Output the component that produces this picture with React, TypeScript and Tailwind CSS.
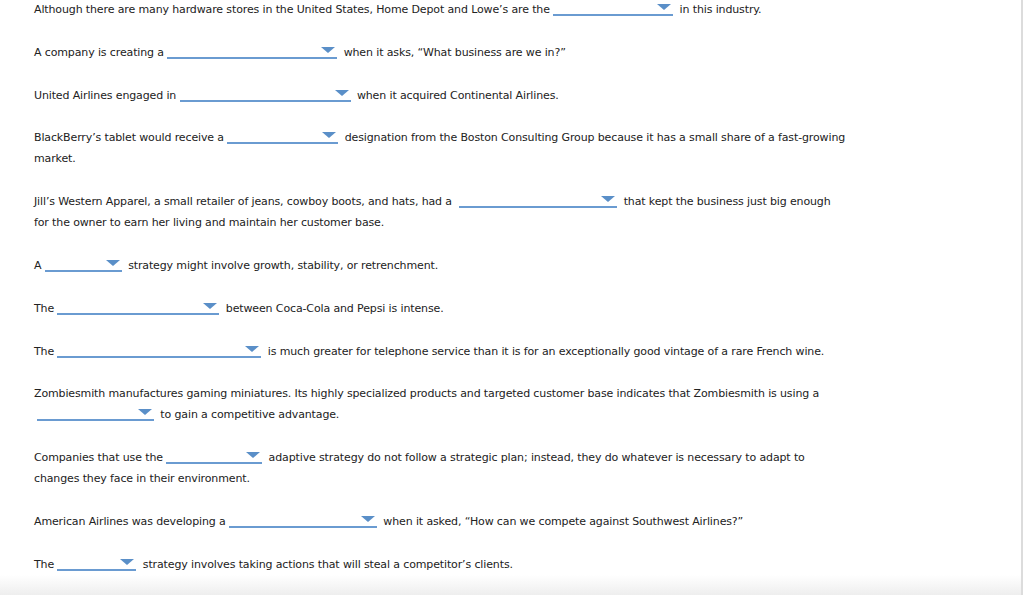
import React from 'react';

function Drop({ w, ml = 0 }: { w: number; ml?: number }) {
  return (
    <span
      className="relative inline-block h-[14px] align-[-3px] border-b-2 border-[#6a9bd1] mr-[3px]"
      style={{ width: w, marginLeft: ml }}
    >
      <span className="absolute right-[2px] bottom-[4px] w-0 h-0 border-l-[7px] border-r-[7px] border-t-[6px] border-l-transparent border-r-transparent border-t-[#5a8fc8]" />
    </span>
  );
}

export default function App() {
  return (
    <div className="relative w-[1024px] h-[595px] overflow-hidden bg-white">
      <div
        className="w-[812px] pl-[34px] box-content text-[11px] leading-[21px] tracking-[-0.13px] text-[#222] flex flex-col gap-[21.8px] -mt-[1px]"
        style={{ fontFamily: '"DejaVu Sans", Verdana, sans-serif' }}
      >
        <p>
          Although there are many hardware stores in the United States, Home Depot and Lowe’s are the <Drop w={120} /> in this industry.
        </p>
        <p>
          A company is creating a <Drop w={170} /> when it asks, “What business are we in?”
        </p>
        <p>
          United Airlines engaged in <Drop w={171} /> when it acquired Continental Airlines.
        </p>
        <p>
          BlackBerry’s tablet would receive a <Drop w={111} /> designation from the Boston Consulting Group because it has a small share of a <span className="whitespace-nowrap">fast-growing</span> market.
        </p>
        <p>
          Jill’s Western Apparel, a small retailer of jeans, cowboy boots, and hats, had a <Drop w={158} ml={4} /> that kept the business just big enough for the owner to earn her living and maintain her customer base.
        </p>
        <p>
          A <Drop w={77} /> strategy might involve growth, stability, or retrenchment.
        </p>
        <p>
          The <Drop w={162} /> between Coca-Cola and Pepsi is intense.
        </p>
        <p>
          The <Drop w={204} /> is much greater for telephone service than it is for an exceptionally good vintage of a rare French wine.
        </p>
        <p>
          Zombiesmith manufactures gaming miniatures. Its highly specialized products and targeted customer base indicates that Zombiesmith is using a <Drop w={117} ml={3} /> to gain a competitive advantage.
        </p>
        <p>
          Companies that use the <Drop w={96} /> adaptive strategy do not follow a strategic plan; instead, they do whatever is necessary to adapt to changes they face in their environment.
        </p>
        <p>
          American Airlines was developing a <Drop w={148} /> when it asked, “How can we compete against Southwest Airlines?”
        </p>
        <p>
          The <Drop w={79} /> strategy involves taking actions that will steal a competitor’s clients.
        </p>
      </div>
      {/* right border + bottom fade */}
      <div className="absolute top-0 right-[1px] w-[2px] h-full bg-[#dcdcdc]" />
      <div className="absolute left-0 right-[3px] bottom-0 h-[20px] bg-gradient-to-b from-white to-[#eeeeee]" />
    </div>
  );
}
